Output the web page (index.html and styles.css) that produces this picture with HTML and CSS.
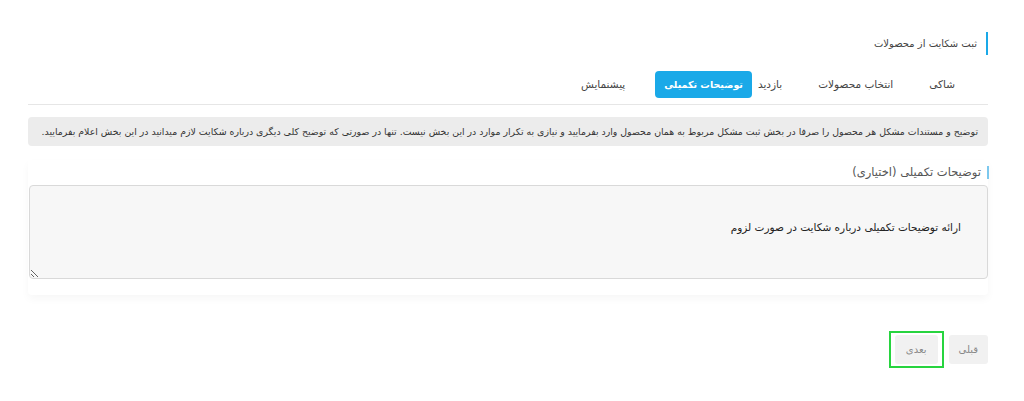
FILE: index.html
```html
<!DOCTYPE html>
<html lang="fa" dir="rtl">
<head>
<meta charset="utf-8">
<link rel="stylesheet" href="styles.css">
</head>
<body>
<div class="page">
  <h2 class="title">ثبت شکایت از محصولات</h2>
  <ul class="tabs">
    <li class="tab">شاکی</li>
    <li class="tab">انتخاب محصولات</li>
    <li class="tab">بازدید</li>
    <li class="tab active">توضیحات تکمیلی</li>
    <li class="tab">پیشنمایش</li>
  </ul>
  <div class="notice">توضیح و مستندات مشکل هر محصول را صرفا در بخش ثبت مشکل مربوط به همان محصول وارد بفرمایید و نیازی به تکرار موارد در این بخش نیست. تنها در صورتی که توضیح کلی دیگری درباره شکایت لازم میدانید در این بخش اعلام بفرمایید.</div>
  <div class="card">
    <label class="label">توضیحات تکمیلی (اختیاری)</label>
    <textarea class="area" placeholder="ارائه توضیحات تکمیلی درباره شکایت در صورت لزوم"></textarea>
  </div>
  <div class="actions">
    <button class="btn">قبلی</button>
    <span class="focus"><button class="btn">بعدی</button></span>
  </div>
</div>
</body>
</html>
```
FILE: styles.css
```css
* { box-sizing: border-box; }
html, body { margin: 0; padding: 0; background: #fff; }
body {
  font-family: "DejaVu Sans", "Liberation Sans", sans-serif;
  color: #333;
  direction: rtl;
}
.page {
  width: 960px;
  margin-right: 36px;
  margin-left: 28px;
  padding-top: 32px;
}
.title {
  margin: 0;
  font-size: 10px;
  font-weight: normal;
  color: #444;
  border-right: 2px solid #1aa9e8;
  padding-right: 9px;
  line-height: 23px;
  height: 23px;
}
.tabs {
  list-style: none;
  margin: 16px 0 0 0;
  padding: 0 16px 6px 0;
  display: flex;
  gap: 2px;
  border-bottom: 1px solid #e6e6e6;
}
.tab {
  font-size: 10.5px;
  color: #444;
  height: 27px;
  line-height: 27px;
  padding: 0 17px;
  border-radius: 4px;
}
.tab.active {
  background: #1aa9e8;
  color: #fff;
  font-weight: bold;
  font-size: 9.5px;
  padding: 0 9px;
  margin-right: -13px;
  margin-left: 11px;
}
.notice {
  margin-top: 12px;
  background: #ececec;
  border-radius: 4px;
  height: 29px;
  line-height: 29px;
  padding: 0 10px;
  font-size: 9.4px;
  color: #333;
  white-space: nowrap;
  overflow: hidden;
}
.card {
  margin-top: 14px;
  padding: 6px 0 16px 0;
  box-shadow: 0 4px 8px rgba(0, 0, 0, 0.035);
  border-radius: 4px;
}
.label {
  display: block;
  font-size: 11.5px;
  color: #555;
  border-right: 2px solid #7cc8ee;
  padding-right: 6px;
  margin-right: -1px;
  line-height: 13px;
  height: 13px;
  margin-bottom: 6px;
}
.area {
  display: block;
  width: 959px;
  height: 94px;
  background: #f7f7f7;
  border: 1px solid #d9d9d9;
  border-radius: 4px;
  padding: 35px 26px 0 26px;
  font-family: "DejaVu Sans", sans-serif;
  font-size: 10.5px;
  resize: vertical;
  direction: rtl;
}
.area::placeholder { color: #222; opacity: 1; }
.actions {
  display: flex;
  gap: 5px;
  margin-top: 36px;
  align-items: center;
}
.btn {
  font-family: "DejaVu Sans", sans-serif;
  font-size: 10px;
  color: #888;
  background: #f1f1f1;
  border: none;
  border-radius: 3px;
  height: 29px;
  padding: 0 10px;
}
.focus {
  display: inline-flex;
  border: 2px solid #27d43f;
  padding: 2px 4px;
}
.focus .btn { padding: 0 11px; }
```
